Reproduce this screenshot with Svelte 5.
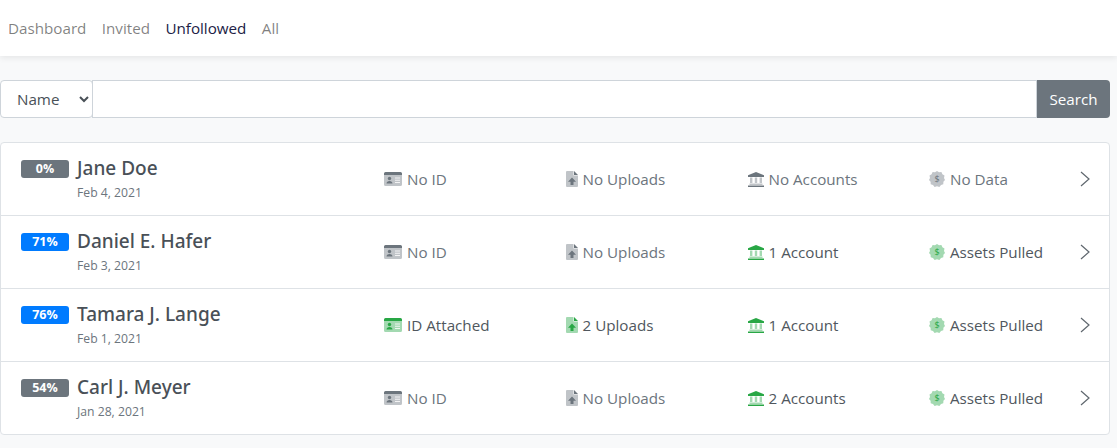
<script>
  const navItems = [
    { label: 'Dashboard' },
    { label: 'Invited' },
    { label: 'Unfollowed', active: true },
    { label: 'All' }
  ];
  const rows = [
    { pct: '0%', blue: false, name: 'Jane Doe', date: 'Feb 4, 2021', id: ['No ID', false], up: ['No Uploads', false], acc: ['No Accounts', false], data: ['No Data', false] },
    { pct: '71%', blue: true, name: 'Daniel E. Hafer', date: 'Feb 3, 2021', id: ['No ID', false], up: ['No Uploads', false], acc: ['1 Account', true], data: ['Assets Pulled', true] },
    { pct: '76%', blue: true, name: 'Tamara J. Lange', date: 'Feb 1, 2021', id: ['ID Attached', true], up: ['2 Uploads', true], acc: ['1 Account', true], data: ['Assets Pulled', true] },
    { pct: '54%', blue: false, name: 'Carl J. Meyer', date: 'Jan 28, 2021', id: ['No ID', false], up: ['No Uploads', false], acc: ['2 Accounts', true], data: ['Assets Pulled', true] }
  ];
</script>

{#snippet idIcon()}
  <svg class="ic" width="18" height="14" viewBox="0 0 18 14">
    <path class="light" d="M0 3h18v9.500a1.500 1.500 0 0 1-1.500 1.500h-15A1.500 1.500 0 0 1 0 12.500z" />
    <path class="dark" d="M1.500 0h15A1.500 1.500 0 0 1 18 1.500V3H0V1.500A1.500 1.500 0 0 1 1.500 0z" />
    <circle class="dark" cx="5.500" cy="6.500" r="1.700" />
    <path class="dark" d="M2.500 11.500c0-1.600 1.300-2.500 3-2.500s3 .9 3 2.500z" />
    <path class="white" d="M11 5.500h5v1h-5zM11 7.700h5v1h-5zM11 9.900h5v1h-5z" />
  </svg>
{/snippet}

{#snippet upIcon()}
  <svg class="ic" width="12" height="16" viewBox="0 0 12 16">
    <path class="light" d="M0 1a1 1 0 0 1 1-1h6.500v4.500H12V15a1 1 0 0 1-1 1H1a1 1 0 0 1-1-1z" />
    <path class="dark" d="M8 0l4 4H8z" />
    <path class="dark" d="M6 6.500L10 10.800H7.500V14h-3v-3.200H2z" />
  </svg>
{/snippet}

{#snippet bankIcon()}
  <svg class="ic" width="16" height="15" viewBox="0 0 16 15">
    <path class="dark" d="M8 0l8 3.200V5H0V3.200z" />
    <path class="light" d="M2 5.500h2.400V11H2zM6.800 5.500h2.400V11H6.800zM11.600 5.500H14V11h-2.400z" />
    <path class="light" d="M1.500 11.500h13V13h-13z" />
    <path class="dark" d="M0 13.500h16V15H0z" />
  </svg>
{/snippet}

{#snippet dataIcon()}
  <svg class="ic" width="16" height="16" viewBox="0 0 16 16">
    <path class="light" d="M8 0l2 1.300 2.400-.2 1 2.200 2.100 1.200-.5 2.400L16 9l-1.600 1.800-.1 2.400-2.300.7L10.400 16 8 15.200 5.600 16l-1.600-2.100-2.300-.7-.1-2.400L0 9l1-2.100-.5-2.400 2.100-1.200 1-2.200L6 1.300z" />
    <text class="dollar" x="8" y="11" text-anchor="middle">$</text>
  </svg>
{/snippet}

<nav class="nav">
  {#each navItems as item}
    <a href="#top" class="link" class:active={item.active}>{item.label}</a>
  {/each}
</nav>

<main class="page">
  <form class="search">
    <select class="picker"><option>Name</option></select>
    <input class="query" type="text" />
    <button class="go" type="button">Search</button>
  </form>

  <section class="card">
    {#each rows as r}
      <div class="row">
        <div class="who">
          <span class="badge" class:blue={r.blue}>{r.pct}</span>
          <div>
            <div class="name">{r.name}</div>
            <div class="date">{r.date}</div>
          </div>
        </div>
        <div class="cell" class:on={r.id[1]}>{@render idIcon()}<span>{r.id[0]}</span></div>
        <div class="cell" class:on={r.up[1]}>{@render upIcon()}<span>{r.up[0]}</span></div>
        <div class="cell" class:on={r.acc[1]}>{@render bankIcon()}<span>{r.acc[0]}</span></div>
        <div class="cell" class:on={r.data[1]}>{@render dataIcon()}<span>{r.data[0]}</span></div>
        <svg class="chev" width="10" height="16" viewBox="0 0 10 16"><path d="M1 1l8 7-8 7" /></svg>
      </div>
    {/each}
  </section>
</main>

<style>
  :global(body) {
    margin: 0;
    background: #f8f9fa;
    font-family: "Open Sans", "Noto Sans", sans-serif;
    font-size: 15.200px;
    color: #495057;
  }
  .nav {
    height: 56px;
    box-sizing: border-box;
    background: #fff;
    box-shadow: 0 2px 6px rgba(0, 0, 0, 0.08);
    display: flex;
    align-items: center;
    padding-left: 8px;
    gap: 15.400px;
  }
  .link {
    color: rgba(0, 0, 0, 0.5);
    text-decoration: none;
    line-height: 24px;
  }
  .link.active {
    color: #212145;
  }
  .page {
    width: 1110px;
    padding-top: 24px;
  }
  .search {
    display: flex;
    height: 38px;
    margin: 0 0 24px;
  }
  .picker {
    width: 93px;
    box-sizing: border-box;
    font: inherit;
    color: #495057;
    background: #fff;
    border: 1px solid #ced4da;
    border-radius: 4px;
    padding: 0 8px 0 12px;
  }
  .query {
    flex: 1;
    min-width: 0;
    box-sizing: border-box;
    margin-left: -1px;
    background: #fff;
    border: 1px solid #ced4da;
    outline: 0;
  }
  .go {
    width: 73px;
    border: 0;
    background: #6c757d;
    color: #fff;
    font: inherit;
    border-radius: 0 4px 4px 0;
    padding: 0;
  }
  .card {
    background: #fff;
    border: 1px solid #dee2e6;
    border-radius: 4px;
  }
  .row {
    display: grid;
    grid-template-columns: 363px 181.500px 182px 181.500px 1fr;
    align-items: center;
    height: 72px;
    padding-left: 20px;
    position: relative;
  }
  .row + .row {
    border-top: 1px solid #dee2e6;
  }
  .who {
    display: flex;
    align-items: flex-start;
    gap: 8px;
    align-self: start;
    padding-top: 13px;
  }
  .badge {
    width: 48px;
    height: 18px;
    margin-top: 4px;
    border-radius: 3px;
    background: #6c757d;
    color: #fff;
    font-size: 12.500px;
    font-weight: 700;
    line-height: 18px;
    text-align: center;
  }
  .badge.blue {
    background: #007bff;
  }
  .name {
    font-family: "Noto Sans", "Open Sans", sans-serif;
    font-size: 19px;
    font-weight: 500;
    line-height: 24px;
  }
  .date {
    font-size: 12.200px;
    line-height: 18px;
    margin-top: 4px;
    color: #6c757d;
  }
  .cell {
    display: flex;
    align-items: center;
    gap: 5px;
    color: #6c757d;
    line-height: 24px;
    --dark: #6c757d;
    --light: #c0c4c8;
  }
  .cell.on {
    color: #50575e;
    --dark: #28a745;
    --light: #a3d9b1;
  }
  .ic {
    flex: none;
  }
  .light {
    fill: var(--light);
  }
  .dark {
    fill: var(--dark);
  }
  .white {
    fill: #fff;
    opacity: 0.8;
  }
  .dollar {
    fill: var(--dark);
    font-size: 9px;
    font-weight: 400;
  }
  .chev {
    position: absolute;
    right: 19px;
    top: 28px;
  }
  .chev path {
    fill: none;
    stroke: #5f676e;
    stroke-width: 1.200;
  }
</style>
